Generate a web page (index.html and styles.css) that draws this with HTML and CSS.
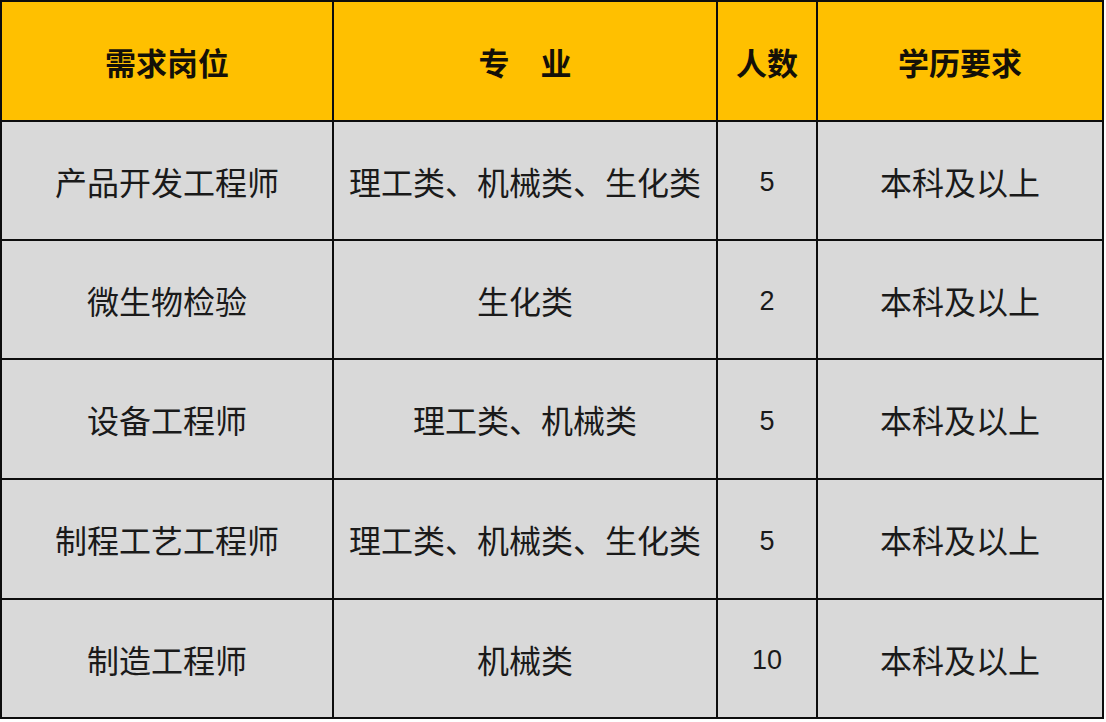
FILE: index.html
```html
<!DOCTYPE html>
<html lang="zh">
<head>
<meta charset="utf-8">
<title>招聘岗位</title>
<link rel="stylesheet" href="styles.css">
</head>
<body>
<div class="table">
  <div class="cell head">需求岗位</div>
  <div class="cell head">专　业</div>
  <div class="cell head">人数</div>
  <div class="cell head">学历要求</div>

  <div class="cell">产品开发工程师</div>
  <div class="cell">理工类、机械类、生化类</div>
  <div class="cell num">5</div>
  <div class="cell">本科及以上</div>

  <div class="cell">微生物检验</div>
  <div class="cell">生化类</div>
  <div class="cell num">2</div>
  <div class="cell">本科及以上</div>

  <div class="cell">设备工程师</div>
  <div class="cell">理工类、机械类</div>
  <div class="cell num">5</div>
  <div class="cell">本科及以上</div>

  <div class="cell">制程工艺工程师</div>
  <div class="cell">理工类、机械类、生化类</div>
  <div class="cell num">5</div>
  <div class="cell">本科及以上</div>

  <div class="cell">制造工程师</div>
  <div class="cell">机械类</div>
  <div class="cell num">10</div>
  <div class="cell">本科及以上</div>
</div>
</body>
</html>
```
FILE: styles.css
```css
html, body {
  margin: 0;
  padding: 0;
  background: #ffffff;
}
.table {
  width: 1104px;
  display: grid;
  grid-template-columns: 330px 382px 98px 284px;
  grid-template-rows: 118px 117px 117px 118px 118px 117px;
  gap: 2px;
  padding: 2px;
  box-sizing: border-box;
  background: #0d0d0d;
}
.cell {
  display: flex;
  align-items: center;
  justify-content: center;
  background: #d9d9d9;
  color: #1a1a1a;
  font-family: "Noto Sans CJK SC", "Noto Sans", sans-serif;
  font-size: 32px;
  line-height: 1;
}
.cell.head {
  background: #ffc000;
  font-weight: bold;
  font-size: 31px;
  color: #141008;
}
.cell.num {
  font-family: "Liberation Sans", Arial, sans-serif;
  font-size: 27px;
  padding-top: 4px;
}
```
